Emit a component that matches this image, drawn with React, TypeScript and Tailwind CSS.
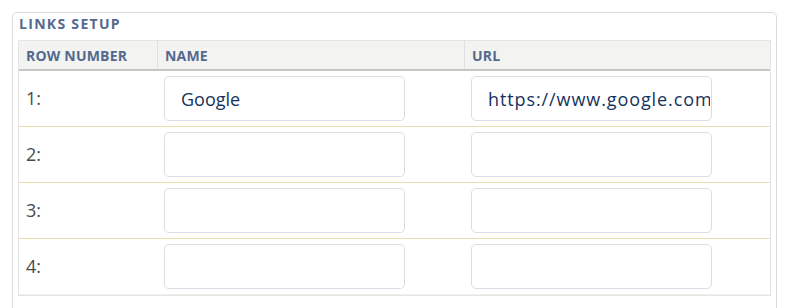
import React from "react"

type LinkRow = {
  name: string
  url: string
}

const rows: LinkRow[] = [
  { name: "Google", url: "https://www.google.com" },
  { name: "", url: "" },
  { name: "", url: "" },
  { name: "", url: "" },
]

export default function App() {
  return (
    <div className="h-[308px] overflow-hidden bg-white pt-3 pl-3 pr-[10px] font-['Open_Sans',sans-serif]">
      <div className="h-[320px] rounded-[5px] border border-[#dddbda] px-[5px]">
        <div className="pt-[3px] pb-[8px] pl-[1px] text-[14px] font-bold leading-[16px] tracking-[1.3px] text-[#54698d]">
          LINKS SETUP
        </div>
        <div className="border border-[#e5e5e5]">
          <div className="grid h-[30px] grid-cols-[139px_307px_1fr] border-b-2 border-[#c9c7c5] bg-[#f3f3f2] text-[14px] font-bold tracking-[0.2px] text-[#54698d]">
            <div className="flex items-center border-r border-[#e0e0e0] pl-[7px]">ROW NUMBER</div>
            <div className="flex items-center border-r border-[#e0e0e0] pl-[7px]">NAME</div>
            <div className="flex items-center pl-[7px]">URL</div>
          </div>
          {rows.map((row, i) => (
            <div
              key={i}
              className={`grid h-[56px] grid-cols-[139px_307px_1fr] items-center ${
                i < rows.length - 1 ? "border-b border-[#e8deb0]" : "border-b border-[#f0f0f0]"
              }`}
            >
              <div className="pl-[7px] text-[18px] text-[#4a4a48]">{i + 1}:</div>
              <div className="pl-[6px]">
                <input
                  defaultValue={row.name}
                  className="h-[45px] w-[241px] rounded-[5px] border border-[#d8dde6] bg-white pl-4 pr-[2px] text-[18px] text-[#16325c] outline-none"
                />
              </div>
              <div className="pl-[6px]">
                <input
                  defaultValue={row.url}
                  className="h-[45px] w-[241px] rounded-[5px] border border-[#d8dde6] bg-white pl-4 pr-[1px] text-[18px] tracking-[0.9px] text-[#16325c] outline-none"
                />
              </div>
            </div>
          ))}
        </div>
      </div>
    </div>
  )
}
